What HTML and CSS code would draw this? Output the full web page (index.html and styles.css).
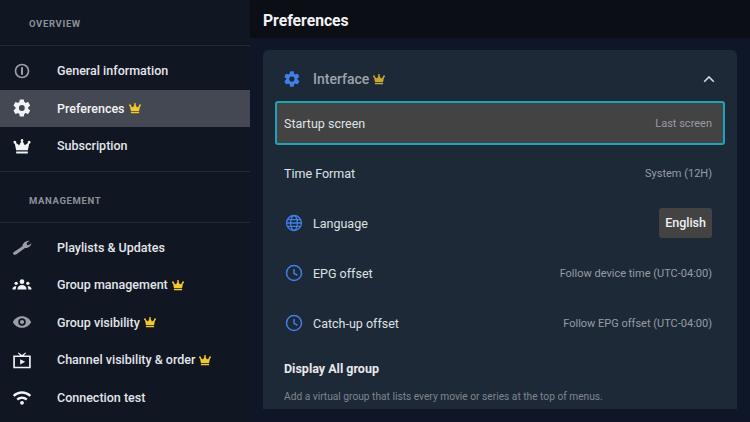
FILE: index.html
```html
<!DOCTYPE html>
<html>
<head>
	<title>Preferences</title>
	<meta charset="utf-8">
	<link rel="stylesheet" href="styles.css">
</head>
<body>
<svg class="defs" width="0" height="0">
	<symbol id="crown" viewBox="0 0 24 24"><path d="M12 3.500a1.700 1.700 0 0 0-.9 3.100L8.600 11 4.900 8.400a1.700 1.700 0 1 0-1.500.8L5 17h14l1.600-7.800a1.700 1.700 0 1 0-1.500-.8L15.400 11l-2.500-4.400A1.700 1.700 0 0 0 12 3.500zM5 18.500h14V21H5z"/></symbol>
	<symbol id="gear" viewBox="0 0 24 24"><path fill-rule="evenodd" d="M19.400 13c.04-.32.060-.66.060-1s-.020-.68-.070-1l2.160-1.680a.5.5 0 0 0 .12-.64l-2.050-3.540a.5.5 0 0 0-.62-.22l-2.550 1.020a7.500 7.500 0 0 0-1.730-1l-.38-2.710A.5.5 0 0 0 13.840 1.800H9.760a.5.5 0 0 0-.5.43l-.38 2.710c-.62.26-1.200.6-1.730 1L4.600 4.920a.5.500 0 0 0-.62.220L1.930 8.680a.5.500 0 0 0 .12.640L4.210 11c-.05.32-.08.66-.08 1s.03.68.07 1l-2.160 1.680a.5.5 0 0 0-.12.640l2.050 3.540c.13.22.39.3.62.22l2.550-1.020c.53.4 1.110.74 1.730 1l.38 2.710c.05.25.26.43.5.43h4.080c.25 0 .46-.18.5-.43l.38-2.710c.62-.26 1.200-.6 1.730-1l2.550 1.020c.23.08.49 0 .62-.22l2.050-3.540a.5.5 0 0 0-.12-.64zM11.800 15.500a3.500 3.500 0 1 1 0-7 3.500 3.500 0 0 1 0 7z"/></symbol>
	<symbol id="clock" viewBox="0 0 24 24"><circle cx="12" cy="12" r="10" fill="none" stroke="currentColor" stroke-width="2"/><path d="M12 6.500V12.500L16.500 15" fill="none" stroke="currentColor" stroke-width="2"/></symbol>
</svg>

<div class="app">
	<div class="sidebar">
		<div class="section-title">OVERVIEW</div>
		<ul class="menu">
			<li>
				<svg class="icon dim" viewBox="0 0 24 24"><circle cx="12" cy="12" r="7.800" fill="none" stroke="currentColor" stroke-width="2"/><rect x="10.800" y="7.500" width="2.400" height="9" fill="currentColor"/></svg>
				General information
			</li>
			<li class="active">
				<svg class="icon"><use href="#gear"/></svg>
				Preferences
				<svg class="crown"><use href="#crown"/></svg>
			</li>
			<li>
				<svg class="icon"><use href="#crown"/></svg>
				Subscription
			</li>
		</ul>
		<div class="section-title">MANAGEMENT</div>
		<ul class="menu">
			<li>
				<svg class="icon dim" viewBox="0 0 24 24"><path d="M1.500 18.500L12.500 11c.4-3.500 3.500-6.500 8.500-6.500l-3.500 3 .6 2.400 3-.6 2-2c.2 3-2.800 6.300-7.500 6L5 21c-2.500 1-4.500-.6-3.500-2.500z"/></svg>
				Playlists &amp; Updates
			</li>
			<li>
				<svg class="icon" viewBox="0 0 24 24"><circle cx="12" cy="8" r="2.800"/><circle cx="5" cy="10" r="2"/><circle cx="19" cy="10" r="2"/><path d="M6.500 17.500c0-3.600 2.500-5.500 5.500-5.500s5.500 1.900 5.500 5.500zM.5 17.500c0-2.500 1.500-4 3.500-4 .6 0 1 .1 1.300.3-.6 1-.9 2.200-.9 3.700zM23.500 17.500c0-2.500-1.500-4-3.500-4-.6 0-1 .1-1.300.3.6 1 .9 2.200.9 3.700z"/></svg>
				Group management
				<svg class="crown"><use href="#crown"/></svg>
			</li>
			<li>
				<svg class="icon dim" viewBox="0 0 24 24"><path fill-rule="evenodd" d="M12 5C7 5 2.800 8 1 12c1.800 4 6 7 11 7s9.200-3 11-7c-1.800-4-6-7-11-7zm0 11.500a4.500 4.500 0 1 1 0-9 4.500 4.500 0 0 1 0 9zm0-7a2.500 2.500 0 1 0 0 5 2.500 2.500 0 0 0 0-5z"/></svg>
				Group visibility
				<svg class="crown"><use href="#crown"/></svg>
			</li>
			<li>
				<svg class="icon" viewBox="0 0 24 24"><path fill-rule="evenodd" d="M1.500 6.500h8.300L7 3.700l.8-.8L12 6l4.200-3.100.8.800-2.800 2.800h8.300V22h-21zM3.500 8.500V20h17V8.500zM9.800 11l6 3.200-6 3.300z"/></svg>
				Channel visibility &amp; order
				<svg class="crown"><use href="#crown"/></svg>
			</li>
			<li>
				<svg class="icon" viewBox="0 0 24 24"><path d="M1 9.500C7.500 3.700 16.500 3.700 23 9.500l-2 2.200C15.700 7 8.300 7 3 11.700zM5.300 14C9.300 10.500 14.700 10.500 18.700 14l-2 2.200c-2.800-2.400-6.600-2.400-9.400 0z"/><circle cx="12" cy="19" r="2.300"/></svg>
				Connection test
			</li>
		</ul>
	</div>

	<div class="main">
		<div class="topbar">Preferences</div>
		<div class="card">
			<div class="card-head">
				<svg class="row-icon"><use href="#gear"/></svg>
				<span class="card-title">Interface</span>
				<svg class="crown dull"><use href="#crown"/></svg>
				<svg class="chevron" viewBox="0 0 12 8"><path d="M1.200 6.800L6 2l4.800 4.800" fill="none" stroke="currentColor" stroke-width="1.600"/></svg>
			</div>
			<div class="row focused">
				<span class="label">Startup screen</span>
				<span class="value">Last screen</span>
			</div>
			<div class="row">
				<span class="label">Time Format</span>
				<span class="value">System (12H)</span>
			</div>
			<div class="row">
				<svg class="row-icon" viewBox="0 0 24 24"><g fill="none" stroke="currentColor" stroke-width="1.700"><circle cx="12" cy="12" r="10"/><ellipse cx="12" cy="12" rx="4.500" ry="10"/><path d="M2 12h20M3.500 7.500h17M3.500 16.500h17"/></g></svg>
				<span class="label">Language</span>
				<span class="pill">English</span>
			</div>
			<div class="row">
				<svg class="row-icon"><use href="#clock"/></svg>
				<span class="label">EPG offset</span>
				<span class="value">Follow device time (UTC-04:00)</span>
			</div>
			<div class="row">
				<svg class="row-icon"><use href="#clock"/></svg>
				<span class="label">Catch-up offset</span>
				<span class="value">Follow EPG offset (UTC-04:00)</span>
			</div>
			<div class="group-title">Display All group</div>
			<div class="group-desc">Add a virtual group that lists every movie or series at the top of menus.</div>
		</div>
	</div>
</div>
</body>
</html>
```

FILE: styles.css
```css
*{
	margin: 0;
	padding: 0;
	box-sizing: border-box;
}
html,body{
	width: 750px;
	height: 422px;
	overflow: hidden;
}
body{
	background-color: #0e1628;
	font-family: Roboto, "Liberation Sans", sans-serif;
}
li{
	list-style: none;
}
.defs{
	position: absolute;
}
.app{
	display: flex;
	height: 422px;
}

/* sidebar */
.sidebar{
	width: 250px;
	background-color: #101723;
	flex-shrink: 0;
}
.section-title{
	height: 46px;
	padding: 17px 0 0 29px;
	font-size: 9.500px;
	line-height: 13px;
	font-weight: 700;
	letter-spacing: .65px;
	color: #8c9199;
	border-bottom: 1px solid #232a36;
}
.menu{
	padding: 6px 0;
	margin-bottom: 5px;
	border-bottom: 1px solid #232a36;
}
.menu:last-child{
	border-bottom: none;
}
.menu li{
	display: flex;
	align-items: center;
	height: 37.500px;
	padding-left: 12px;
	font-size: 12.500px;
	font-weight: 500;
	color: #e4e6ea;
}
.menu li.active{
	background-color: #434852;
	color: #f2f3f5;
}
.icon{
	width: 20px;
	height: 20px;
	margin-right: 25px;
	fill: #f1f2f4;
	flex-shrink: 0;
}
.icon.dim{
	fill: #9a9ea5;
	color: #9a9ea5;
}
.crown{
	width: 14px;
	height: 14px;
	margin-left: 3px;
	fill: #f3c72d;
}
.crown.dull{
	fill: #c8a634;
}

/* main */
.main{
	flex: 1;
	min-width: 0;
}
.topbar{
	height: 38px;
	padding-left: 13px;
	background-color: #0b0e14;
	font-size: 15.700px;
	line-height: 41px;
	font-weight: 700;
	color: #f1f2f4;
}
.card{
	height: 359px;
	margin: 12px 13px 0;
	padding: 0 12px;
	background-color: #1e2938;
	border-radius: 6px 6px 0 0;
	overflow: hidden;
}
.card-head{
	display: flex;
	align-items: center;
	height: 51px;
	padding: 7px 10px 0 8px;
	color: #3f7fe6;
}
.card-head .row-icon{
	margin-left: 0;
	margin-right: 12px;
}
.card-title{
	font-size: 14px;
	font-weight: 500;
	color: #9ea3ab;
}
.chevron{
	width: 12px;
	height: 8px;
	margin-left: auto;
	color: #d5d8dc;
}
.row{
	display: flex;
	align-items: center;
	height: 44px;
	margin-bottom: 6px;
	padding: 0 11px 0 7px;
	border: 2px solid transparent;
	border-radius: 3px;
	color: #3f7fe6;
}
.row.focused{
	background-color: #434343;
	border-color: #1fa3b8;
}
.row-icon{
	width: 18px;
	height: 18px;
	margin-left: 1px;
	margin-right: 10px;
	fill: #3f7fe6;
	flex-shrink: 0;
}
.label{
	font-size: 12.500px;
	color: #dfe1e4;
}
.value{
	margin-left: auto;
	font-size: 11px;
	color: #979ca4;
}
.pill{
	margin-left: auto;
	padding: 0 6px;
	height: 30px;
	line-height: 30px;
	background-color: #434343;
	border-radius: 3px;
	font-size: 12.500px;
	font-weight: 500;
	color: #f0f0f0;
}
.group-title{
	margin: 16px 0 0 9px;
	font-size: 12.500px;
	line-height: 16px;
	font-weight: 700;
	color: #e8eaec;
}
.group-desc{
	margin: 13px 0 0 9px;
	font-size: 10.200px;
	line-height: 14px;
	color: #7f858e;
}
```
